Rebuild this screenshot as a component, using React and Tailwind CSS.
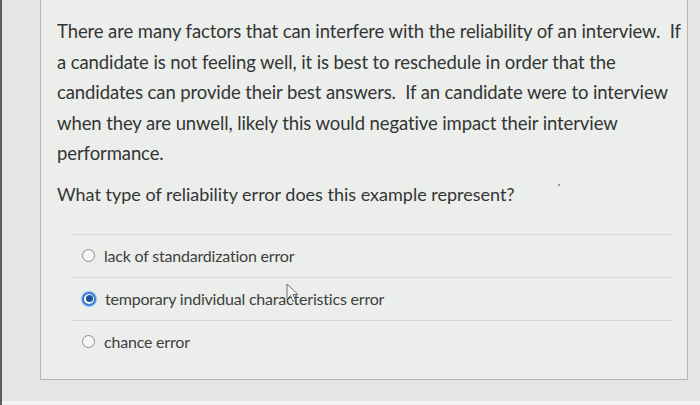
const options = [
  { label: "lack of standardization error", checked: false },
  { label: "temporary individual characteristics error", checked: true },
  { label: "chance error", checked: false },
];

const lines = [
  "There are many factors that can interfere with the reliability of an interview.\u00a0 If",
  "a candidate is not feeling well, it is best to reschedule in order that the",
  "candidates can provide their best answers.\u00a0 If an candidate were to interview",
  "when they are unwell, likely this would negative impact their interview",
  "performance.",
];

function Radio({ checked }) {
  if (checked) {
    return (
      <span className="flex h-[14px] w-[14px] items-center justify-center rounded-full border-2 border-[#3a7bd5] bg-white shadow-[0_0_0_1px_#9cc0ee]">
        <span className="h-[7px] w-[7px] rounded-full bg-[#1a4f9e]" />
      </span>
    );
  }
  return <span className="h-[13px] w-[13px] rounded-full border-[1.5px] border-[#8a8c8a] bg-[#f6f7f6]" />;
}

function Cursor() {
  return (
    <svg className="absolute left-[284px] top-[283px]" width="14" height="20" viewBox="0 0 14 20">
      <path d="M1 1 L1 16 L4.5 12.5 L7 18.5 L9.5 17.5 L7 11.5 L12 11.5 Z" fill="#f4f5f4" stroke="#6d6f6d" strokeWidth="1" strokeLinejoin="round" />
    </svg>
  );
}

export default function App() {
  return (
    <div
      className="relative h-[405px] w-[700px] overflow-hidden border-l-2 border-[#5c5e5c] bg-[#e4e6e3] text-[#333534]"
      style={{ fontFamily: "Lato, 'Open Sans', sans-serif" }}
    >
      <div className="ml-[38px] mr-[12px] h-[380px] border-x border-b border-[#b4b6b4] bg-[#eceeeb] pl-[16px] pt-[16px]">
        <div className="whitespace-nowrap text-[18.5px] leading-[30.6px] tracking-[-0.1px]">
          {lines.map((l) => (
            <div key={l}>{l}</div>
          ))}
        </div>
        <p className="mt-[10px] whitespace-nowrap text-[18px] leading-[30px]">
          What type of reliability error does this example represent?
        </p>

        <div className="mt-[25px] mr-[14px] ml-[14px]">
          {options.map((o) => (
            <div key={o.label} className="flex h-[43px] items-center gap-[9px] border-t border-[#d6d8d5] pl-[11px]">
              <Radio checked={o.checked} />
              <span className="text-[16px] tracking-[-0.2px] text-[#3d3f3e]">{o.label}</span>
            </div>
          ))}
        </div>
      </div>
      <span className="absolute left-[556px] top-[184px] h-[2px] w-[2px] rounded-full bg-[#777]" />
      <Cursor />
      <div className="absolute bottom-0 left-0 h-[4px] w-full bg-[#f4f5f3]" />
    </div>
  );
}
